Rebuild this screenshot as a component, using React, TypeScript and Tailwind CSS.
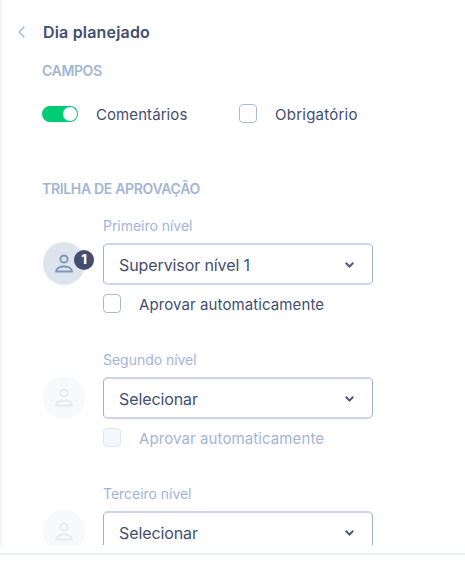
import { useState } from "react"
import clsx from "clsx"

const levels = [
  { id: "first", label: "Primeiro nível", value: "Supervisor nível 1", order: 1, hasAuto: true },
  { id: "second", label: "Segundo nível", value: "Selecionar", hasAuto: true },
  { id: "third", label: "Terceiro nível", value: "Selecionar", hasAuto: false },
]

function Checkbox({ checked, disabled, onChange }: { checked: boolean; disabled?: boolean; onChange: () => void }) {
  return (
    <button
      type="button"
      role="checkbox"
      aria-checked={checked}
      disabled={disabled}
      onClick={onChange}
      className={clsx(
        "h-[19px] w-[18px] shrink-0 rounded-[4px] border",
        disabled ? "border-[#dfe7f1] bg-[#f3f6fb]" : "border-[#a9bad8]",
        checked && "bg-[#00cc76]"
      )}
    />
  )
}

function Avatar({ order }: { order?: number }) {
  return (
    <div
      className={clsx(
        "relative mt-[26px] flex h-[43px] w-[42px] shrink-0 items-center justify-center rounded-full",
        order ? "bg-[#dce5ee] text-[#7f97b6]" : "bg-[#f8f9fb] text-[#e6e9f0]"
      )}
    >
      <svg width="18" height="19" viewBox="0 0 18 19" fill="none" stroke="currentColor" strokeWidth="2">
        <circle cx="9" cy="5" r="3.6" />
        <path d="M1.100 17.500c0-3.200 3.600-5 7.900-5s7.900 1.800 7.900 5Z" />
      </svg>
      {order && (
        <span className="absolute top-[8px] left-[31px] flex size-5 items-center justify-center rounded-full bg-[#434e70] text-[13px] font-extrabold text-white">
          {order}
        </span>
      )}
    </div>
  )
}

export default function App() {
  const [comments, setComments] = useState(true)
  const [required, setRequired] = useState(false)
  const [auto, setAuto] = useState(false)

  return (
    <div className="h-[565px] w-[465px] overflow-hidden bg-white font-['Inter','Liberation_Sans',sans-serif] text-[15px] text-[#434e70]">
      <div className="h-[545px] overflow-hidden border-l-2 border-[#f0f5fa] pt-[21px] pl-4">
        {/* Header */}
        <div className="flex h-[22px] items-center">
          <svg width="7" height="12" viewBox="0 0 7 12" fill="none" stroke="#a9b8d4" strokeWidth="1.5" className="mb-px">
            <path d="M6.300 .7 1.200 6l5.100 5.300" />
          </svg>
          <h1 className="ml-[18px] text-[16px] font-semibold tracking-[0.18px]">Dia planejado</h1>
        </div>

        <div className="pl-[25px]">
          {/* Fields */}
          <h2 className="mt-[18px] -ml-px h-5 text-[14px] leading-5 font-semibold tracking-[-0.37px] text-[#a3b5d6]">
            CAMPOS
          </h2>
          <div className="mt-[21px] flex h-[22px] items-center">
            <button
              type="button"
              role="switch"
              aria-checked={comments}
              onClick={() => setComments(!comments)}
              className={clsx(
                "mt-[2px] -ml-px flex h-4 w-9 items-center rounded-full px-px",
                comments ? "justify-end bg-[#00cc76]" : "bg-[#a3b5d6]"
              )}
            >
              <span className="size-[14px] rounded-full bg-white" />
            </button>
            <span className="ml-[18px] w-[143px] pt-[4px] tracking-[0.08px]">Comentários</span>
            <Checkbox checked={required} onChange={() => setRequired(!required)} />
            <span className="ml-[18px] pt-[4px] tracking-[0.24px]">Obrigatório</span>
          </div>

          {/* Approval trail */}
          <h2 className="mt-[55px] -ml-px h-5 text-[14px] leading-5 font-semibold tracking-[-0.33px] text-[#a3b5d6]">
            TRILHA DE APROVAÇÃO
          </h2>
          <div className="mt-[17px]">
            {levels.map((level) => (
              <div key={level.id} className="flex h-[134px]">
                <Avatar order={level.order} />
                <div className="ml-[18px] w-[270px]">
                  <p className="h-[27px] text-[14px] leading-5 tracking-[-0.03px] text-[#a3b5d6]">{level.label}</p>
                  <button
                    type="button"
                    className="flex h-[42px] w-full items-center justify-between rounded-[5px] border border-y-2 border-[#a0b2d3] border-y-[#cbd6e8] pr-[18px] pl-[15px]"
                  >
                    <span className="pt-[2px] text-[16px] tracking-[-0.1px]">{level.value}</span>
                    <svg width="9" height="6" viewBox="0 0 9 6" fill="none" stroke="#4f5d83" strokeWidth="2" className="mt-px">
                      <path d="M.7.7 4.500 4.500 8.300.7" />
                    </svg>
                  </button>
                  {level.hasAuto && (
                    <div className="mt-[8px] flex h-5 items-center">
                      <Checkbox checked={!!level.order && auto} disabled={!level.order} onChange={() => setAuto(!auto)} />
                      <span className={clsx("ml-[18px] pt-[4px] tracking-[0.1px]", !level.order && "text-[#a3b5d6]")}>
                        Aprovar automaticamente
                      </span>
                    </div>
                  )}
                </div>
              </div>
            ))}
          </div>
        </div>
      </div>

      {/* Footer divider */}
      <div className="mt-2 h-[2px] bg-[#ecf1f6]" />
    </div>
  )
}
